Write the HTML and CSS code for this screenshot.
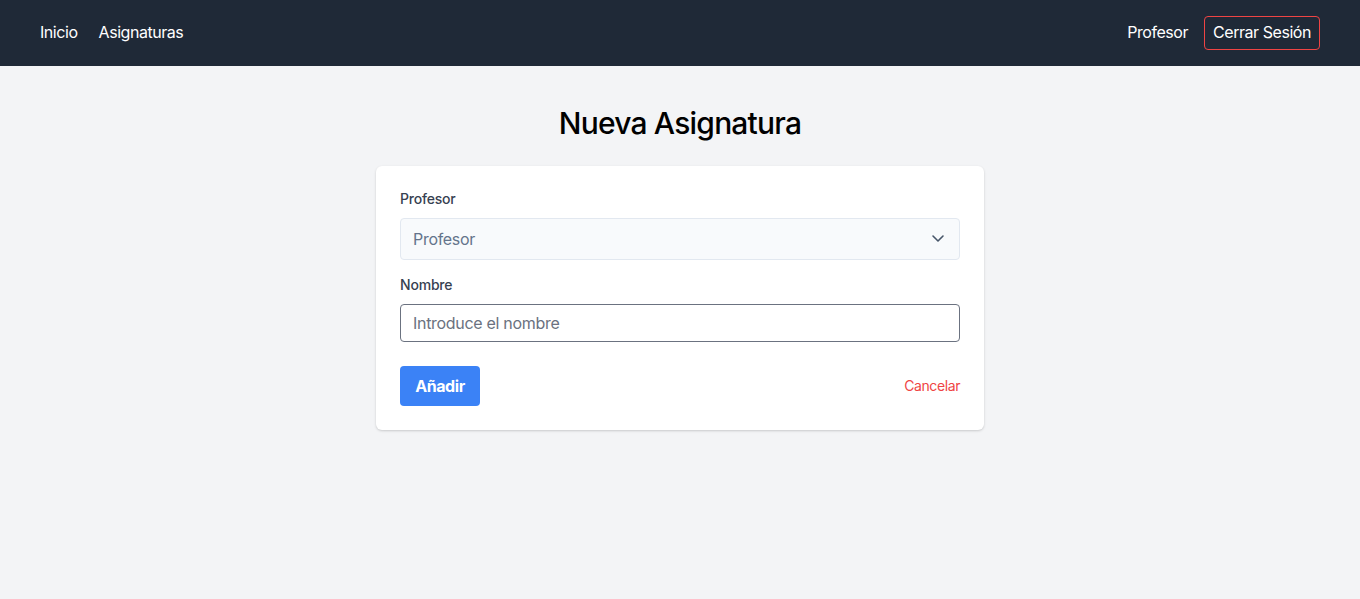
FILE: index.html
```html
<!DOCTYPE html>
<html lang="es">
<head>
<meta charset="utf-8">
<title>Nueva Asignatura</title>
<link rel="stylesheet" href="styles.css">
</head>
<body>
<nav class="nav">
  <div class="nav-left">
    <a class="nav-link" href="#">Inicio</a>
    <a class="nav-link" href="#">Asignaturas</a>
  </div>
  <div class="nav-right">
    <a class="nav-link" href="#">Profesor</a>
    <button class="logout" type="button">Cerrar Sesión</button>
  </div>
</nav>
<main class="main">
  <h1 class="title">Nueva Asignatura</h1>
  <form class="card">
    <label class="label" for="prof">Profesor</label>
    <div class="select-wrap">
      <select id="prof" class="select">
        <option>Profesor</option>
      </select>
      <svg class="chevron" width="20" height="20" viewBox="0 0 20 20" fill="none"><path d="M5 8l5 5 5-5" stroke="#475569" stroke-width="1.6" stroke-linecap="round" stroke-linejoin="round"/></svg>
    </div>
    <label class="label label-2" for="nombre">Nombre</label>
    <input id="nombre" class="input" type="text" placeholder="Introduce el nombre">
    <div class="actions">
      <button class="btn" type="button">Añadir</button>
      <a class="cancel" href="#">Cancelar</a>
    </div>
  </form>
</main>
</body>
</html>
```
FILE: styles.css
```css
* { box-sizing: border-box; }
html, body { margin: 0; padding: 0; }
body {
  background: #f3f4f6;
  font-family: "Inter", "Noto Sans", sans-serif;
  color: #111827;
  min-height: 599px;
}
.nav {
  background: #1f2937;
  height: 66px;
  display: flex;
  align-items: center;
  justify-content: space-between;
  padding: 0 40px 2px;
}
.nav-left, .nav-right {
  display: flex;
  align-items: center;
  gap: 21px;
}
.nav-right { gap: 16px; }
.nav-link {
  color: #ffffff;
  text-decoration: none;
  font-size: 16px;
  letter-spacing: -0.45px;
}
.logout {
  font-family: inherit;
  font-size: 16px;
  letter-spacing: -0.45px;
  color: #ffffff;
  background: transparent;
  border: 1px solid #ef4444;
  border-radius: 4px;
  height: 34px;
  padding: 0 8px 2px;
  margin-top: 2px;
}
.main {
  display: flex;
  flex-direction: column;
  align-items: center;
  padding-top: 39px;
}
.title {
  margin: 0 0 25px;
  font-size: 30px;
  line-height: 36px;
  font-weight: 500;
  color: #000;
  letter-spacing: -0.8px;
}
.card {
  width: 608px;
  background: #fff;
  border-radius: 6px;
  box-shadow: 0 1px 3px rgba(0,0,0,0.12), 0 1px 2px rgba(0,0,0,0.06);
  padding: 24px;
  display: flex;
  flex-direction: column;
}
.label {
  font-size: 14px;
  line-height: 20px;
  font-weight: 500;
  color: #374151;
  letter-spacing: -0.2px;
  margin-top: -1px;
  margin-bottom: 9px;
}
.label-2 { margin-top: 15px; margin-bottom: 9px; }
.select-wrap { position: relative; }
.select {
  width: 100%;
  height: 42px;
  appearance: none;
  -webkit-appearance: none;
  background: #f8fafc;
  border: 1px solid #e2e8f0;
  border-radius: 4px;
  padding: 0 12px;
  font-family: inherit;
  font-size: 16px;
  letter-spacing: -0.3px;
  color: #64748b;
}
.chevron {
  position: absolute;
  right: 12px;
  top: 10px;
  pointer-events: none;
}
.input {
  height: 38px;
  border: 1px solid #6b7280;
  border-radius: 4px;
  padding: 0 12px;
  font-family: inherit;
  font-size: 16px;
  letter-spacing: -0.3px;
  color: #111827;
}
.input::placeholder { color: #6b7280; }
.actions {
  display: flex;
  justify-content: space-between;
  align-items: center;
  margin-top: 24px;
}
.btn {
  width: 80px;
  height: 40px;
  background: #3b82f6;
  color: #fff;
  border: none;
  border-radius: 4px;
  font-family: inherit;
  font-size: 16px;
  font-weight: 700;
  letter-spacing: -0.4px;
}
.cancel {
  color: #ef4444;
  font-size: 14px;
  letter-spacing: -0.4px;
  line-height: 18px;
  text-decoration: none;
}
```
